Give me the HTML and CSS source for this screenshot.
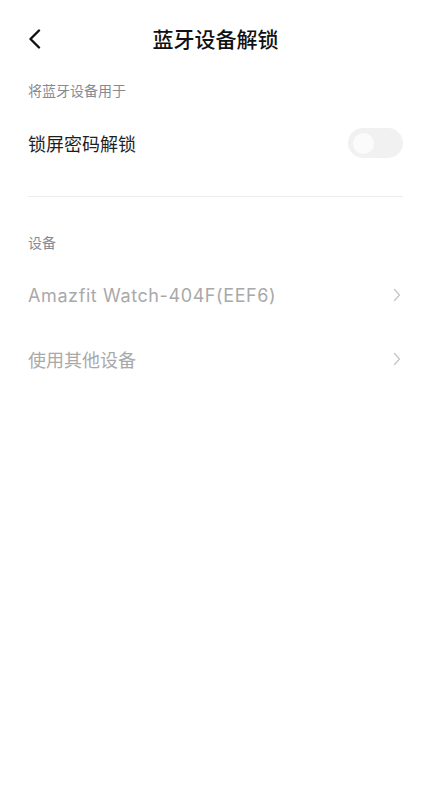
FILE: index.html
```html
<!DOCTYPE html>
<html lang="zh-CN">
<head>
    <meta charset="UTF-8">
    <meta name="viewport" content="width=device-width, initial-scale=1.0">
    <title>蓝牙设备解锁</title>
    <link rel="stylesheet" href="styles.css">
</head>
<body>
    <div class="page">
        <header class="top-bar">
            <button class="back" aria-label="返回">
                <svg width="14" height="20" viewBox="0 0 14 20">
                    <path d="M11 1.5 L2.5 10 L11 18.5" fill="none" stroke="#111" stroke-width="2.4" stroke-linecap="round" stroke-linejoin="round"/>
                </svg>
            </button>
            <h1 class="title">蓝牙设备解锁</h1>
        </header>

        <section class="group">
            <div class="group-label">将蓝牙设备用于</div>
            <div class="row toggle-row">
                <span class="row-text">锁屏密码解锁</span>
                <span class="switch"><span class="knob"></span></span>
            </div>
        </section>

        <div class="divider"></div>

        <section class="group devices">
            <div class="group-label">设备</div>
            <div class="row link">
                <span class="row-text muted latin">Amazfit Watch-404F(EEF6)</span>
                <svg class="chev" width="8" height="14" viewBox="0 0 8 14">
                    <path d="M1.5 1.5 L6.5 7 L1.5 12.5" fill="none" stroke="#c8c8c8" stroke-width="1.4" stroke-linecap="round" stroke-linejoin="round"/>
                </svg>
            </div>
            <div class="row link">
                <span class="row-text muted">使用其他设备</span>
                <svg class="chev" width="8" height="14" viewBox="0 0 8 14">
                    <path d="M1.5 1.5 L6.5 7 L1.5 12.5" fill="none" stroke="#c8c8c8" stroke-width="1.4" stroke-linecap="round" stroke-linejoin="round"/>
                </svg>
            </div>
        </section>
    </div>
</body>
</html>
```

FILE: styles.css
```css
body {
    margin: 0;
    background: #ffffff;
    font-family: "Noto Sans", "Noto Sans CJK SC", sans-serif;
    color: #1a1a1a;
}
.page {
    width: 430px;
    min-height: 800px;
    padding: 0 27px 0 28px;
    box-sizing: border-box;
}
.top-bar {
    position: relative;
    height: 78px;
    display: flex;
    align-items: center;
    justify-content: center;
}
.back {
    position: absolute;
    left: 0;
    top: 29px;
    padding: 0;
    border: none;
    background: none;
    display: flex;
}
.title {
    margin: 0;
    font-size: 21px;
    font-weight: 500;
    color: #111;
    transform: translateY(-1px);
}
.group-label {
    font-size: 14px;
    color: #858a94;
    line-height: 26px;
}
.row {
    display: flex;
    align-items: center;
    justify-content: space-between;
}
.row-text {
    font-size: 18px;
    color: #1f1f1f;
}
.toggle-row {
    height: 78px;
}
.switch {
    width: 55px;
    height: 30px;
    border-radius: 15px;
    background: #f1f1f1;
    display: flex;
    align-items: center;
    padding-left: 5px;
    box-sizing: border-box;
}
.knob {
    width: 21px;
    height: 21px;
    border-radius: 50%;
    background: #fbfbfb;
}
.divider {
    height: 1px;
    background: #ececec;
    margin-top: 14px;
}
.devices {
    padding-top: 33px;
}
.devices .group-label {
    margin-bottom: 7px;
}
.devices .row {
    height: 64px;
}
.muted {
    color: #a9a9a9;
}
.latin {
    font-family: Inter, "Noto Sans", sans-serif;
    letter-spacing: 0.6px;
}
.chev {
    margin-right: 2px;
}
```
